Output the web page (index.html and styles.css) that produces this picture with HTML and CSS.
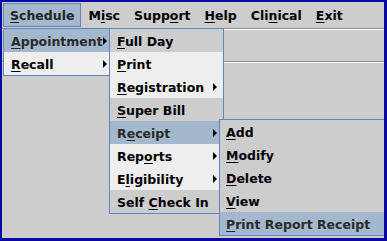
FILE: index.html
```html
<!DOCTYPE html>
<html lang="en">
<head>
  <meta charset="UTF-8" />
  <meta name="viewport" content="width=device-width, initial-scale=1.0" />
  <title>Schedule Menu</title>
  <link rel="stylesheet" href="styles.css">
</head>
<body>
  <div class="window">
    <nav class="menubar">
      <span class="menu open"><u>S</u>chedule</span>
      <span class="menu">M<u>i</u>sc</span>
      <span class="menu">Supp<u>o</u>rt</span>
      <span class="menu"><u>H</u>elp</span>
      <span class="menu">Cli<u>n</u>ical</span>
      <span class="menu"><u>E</u>xit</span>
    </nav>
    <div class="toolbar"></div>
    <div class="desk"></div>

    <ul class="popup popup-schedule">
      <li class="item sub selected"><span><u>A</u>ppointment</span><i class="arrow"></i></li>
      <li class="item sub light"><span><u>R</u>ecall</span><i class="arrow"></i></li>
    </ul>

    <ul class="popup popup-appointment">
      <li class="item"><span><u>F</u>ull Day</span></li>
      <li class="item light"><span><u>P</u>rint</span></li>
      <li class="item sub light"><span><u>R</u>egistration</span><i class="arrow"></i></li>
      <li class="item"><span><u>S</u>uper Bill</span></li>
      <li class="item sub selected"><span>R<u>e</u>ceipt</span><i class="arrow"></i></li>
      <li class="item sub light"><span>Rep<u>o</u>rts</span><i class="arrow"></i></li>
      <li class="item sub light"><span>E<u>l</u>igibility</span><i class="arrow"></i></li>
      <li class="item"><span>Self <u>C</u>heck In</span></li>
    </ul>

    <ul class="popup popup-receipt">
      <li class="item"><span><u>A</u>dd</span></li>
      <li class="item"><span><u>M</u>odify</span></li>
      <li class="item"><span><u>D</u>elete</span></li>
      <li class="item"><span><u>V</u>iew</span></li>
      <li class="item selected"><span><u>P</u>rint Report Receipt</span></li>
    </ul>
  </div>
</body>
</html>
```

FILE: styles.css
```css
* {
  box-sizing: border-box;
}
body {
  margin: 0;
  font-family: "DejaVu Sans", Verdana, sans-serif;
  font-weight: bold;
  font-size: 12.5px;
  color: #000;
}
u {
  text-decoration: underline;
  text-decoration-thickness: 1px;
  text-underline-offset: 2px;
}
.window {
  position: relative;
  width: 387px;
  height: 241px;
  display: flex;
  flex-direction: column;
  background: #cdcdcd;
  border-style: solid;
  border-color: #0a0aa0;
  border-width: 2px 3px 3px 2px;
  overflow: hidden;
}
.menubar {
  display: flex;
  height: 27px;
  padding: 1px 0 0 1px;
  border-bottom: 1px solid #8c8c8c;
}
.menu {
  height: 24px;
  padding: 2px 7px 0;
  line-height: 21px;
  white-space: nowrap;
}
.menu.open {
  padding: 1px 6px 0;
  background: #a3b8cc;
  border: 1px solid #6382bf;
  color: #222;
}
.toolbar {
  height: 33px;
  border-top: 1px solid #fff;
  border-bottom: 1px solid #8c8c8c;
}
.desk {
  flex: 1;
  border-top: 1px solid #fff;
}
.popup {
  position: absolute;
  margin: 0;
  padding: 0;
  list-style: none;
  border: 1px solid #6382bf;
  background: #cdcdcd;
}
.popup-schedule {
  left: 1px;
  top: 26px;
  width: 107px;
}
.popup-appointment {
  left: 107px;
  top: 26px;
  width: 115px;
}
.popup-receipt {
  left: 217px;
  top: 117px;
  width: 166px;
}
.item {
  display: flex;
  align-items: center;
  height: 23px;
  padding: 2px 6px 0 7px;
  line-height: 21px;
  white-space: nowrap;
}
.popup-schedule .item {
  padding-right: 2px;
}
.popup-receipt .item {
  padding-left: 6px;
}
.item span {
  align-self: flex-start;
}
.light {
  background: #eeeeee;
}
.selected {
  background: #a3b8cc;
  color: #2a2a2a;
}
.arrow {
  margin-left: auto;
  margin-top: -1px;
  width: 0;
  height: 0;
  border-left: 4px solid #000;
  border-top: 4px solid transparent;
  border-bottom: 4px solid transparent;
}
```
